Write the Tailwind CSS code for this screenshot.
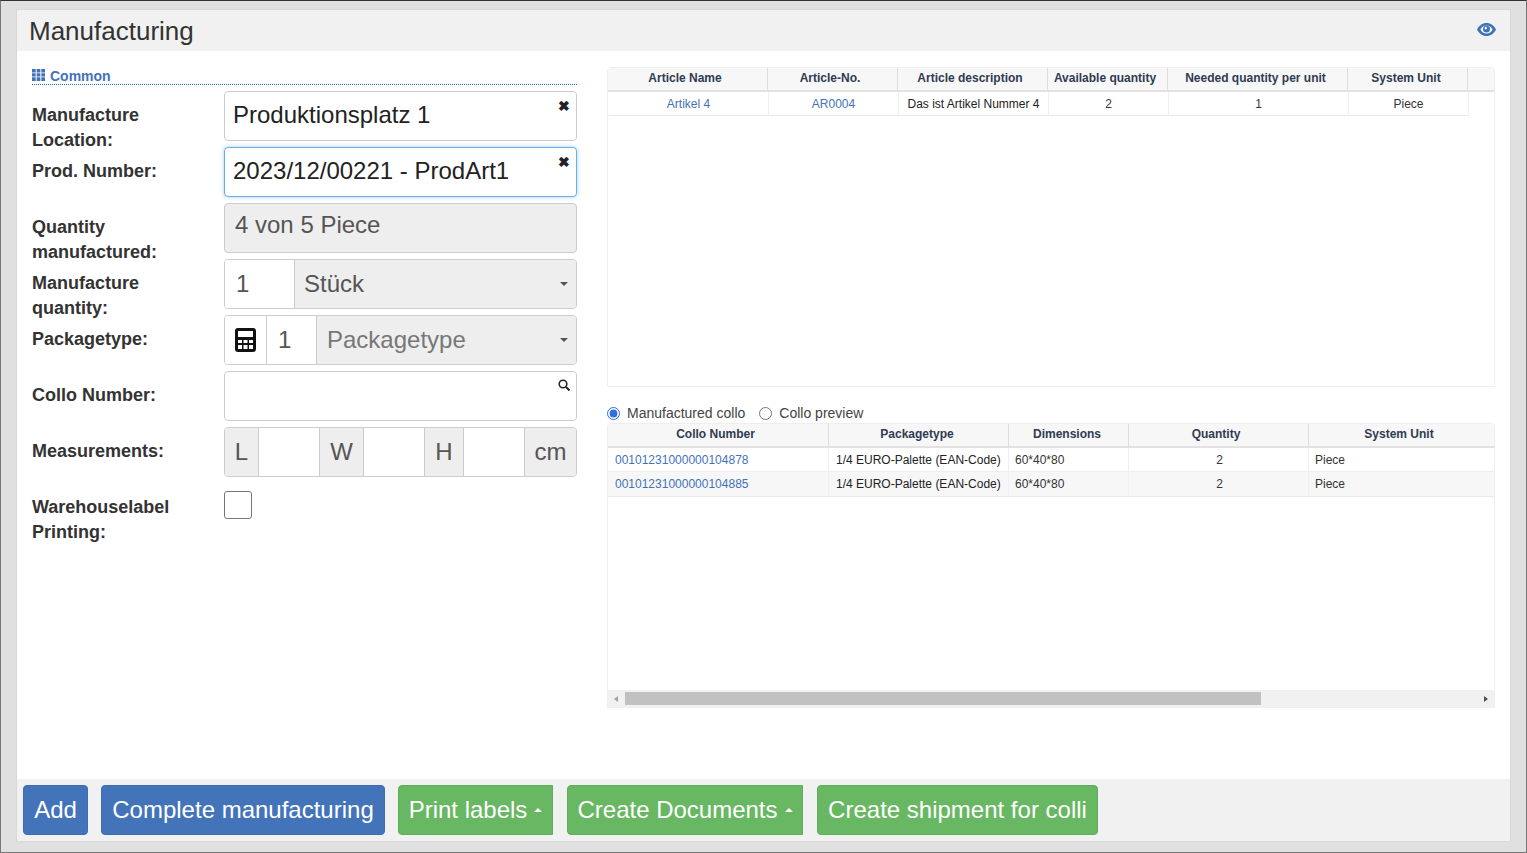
<!DOCTYPE html>
<html lang="en">
<head>
  <meta charset="UTF-8" />
  <title>Manufacturing</title>
  <script src="https://cdn.jsdelivr.net/npm/@tailwindcss/browser@4"></script>
</head>
<body class="bg-[#e0e0e0] font-['Liberation_Sans',Arial,sans-serif] text-[#333] overflow-hidden">
  <div class="h-[853px] w-[1527px] border-t border-l border-r border-b border-t-[#333] border-x-[#777] border-b-[#777] px-[15px] pt-[8px]">
    <div class="flex flex-col h-[833px] bg-white border border-[#d8d8d8]">

      <!-- Header -->
      <header class="flex items-center justify-between h-[41px] shrink-0 bg-[#f1f1f1] pl-[12px] pr-[14px]">
        <h1 class="text-[26px] text-[#333] leading-[42px]">Manufacturing</h1>
        <svg class="w-[19px] h-[13px] mb-[2px] text-[#3f75b8]" viewBox="0 0 19 13">
          <path fill="currentColor" d="M9.500 0C5.300 0 2 2.600 0 6.500 2 10.400 5.300 13 9.500 13s7.500-2.600 9.500-6.500C17 2.600 13.700 0 9.500 0z"/>
          <path fill="#fff" d="M9.500 2.500c-2.600 0-4.800 1.600-6 4 1.200 2.400 3.400 4 6 4s4.800-1.600 6-4c-1.200-2.400-3.400-4-6-4z"/>
          <circle fill="currentColor" cx="9.500" cy="6" r="3.500"/>
          <path fill="#fff" d="M8.500 3.800a1.300 1.300 0 0 1 1.400 1.300 1.300 1.300 0 0 1-2.200 1 2.200 2.200 0 0 1 .8-2.300z"/>
        </svg>
      </header>

      <!-- Main -->
      <main class="flex flex-1 min-h-0 pl-[15px] pr-[15px]">

        <!-- Form -->
        <section class="w-[545px] shrink-0 pt-[16px]">
          <div class="flex items-center gap-[5px] h-[18px] border-b border-dotted border-[#2f6fc0] text-[14px] font-bold text-[#4472b8] leading-[18px]">
            <svg class="w-[13px] h-[12px] mb-[1px]" viewBox="0 0 13 12" fill="currentColor">
              <path d="M0 0h3.700v3.600H0zM4.650 0h3.700v3.600h-3.700zM9.300 0H13v3.600H9.300zM0 4.200h3.700v3.400H0zM4.650 4.200h3.700v3.400h-3.700zM9.300 4.200H13v3.400H9.300zM0 8.200h3.700V12H0zM4.650 8.200h3.700V12h-3.700zM9.300 8.200H13V12H9.300z"/>
            </svg>
            <span>Common</span>
          </div>

          <div class="mt-[6px] flex flex-col gap-[6px] text-[18px] font-bold text-[#333] leading-[25px]">

            <div class="flex h-[50px]">
              <label class="w-[192px] shrink-0 pt-[12px]">Manufacture<br>Location:</label>
              <div class="relative flex-1 bg-white border border-[#ccc] rounded-[4px] pl-[8px] text-[24px] font-normal leading-[46px] text-[#222]">
                Produktionsplatz 1
                <span class="absolute right-[6px] top-[6px] text-[14px] leading-[16px] font-bold text-[#222]">✖</span>
              </div>
            </div>

            <div class="flex h-[50px]">
              <label class="w-[192px] shrink-0 pt-[12px]">Prod. Number:</label>
              <div class="relative flex-1 bg-white border border-[#66afe9] shadow-[0_0_4px_rgba(102,175,233,0.6)] rounded-[4px] pl-[8px] text-[24px] font-normal leading-[46px] text-[#222]">
                2023/12/00221 - ProdArt1
                <span class="absolute right-[6px] top-[6px] text-[14px] leading-[16px] font-bold text-[#222]">✖</span>
              </div>
            </div>

            <div class="flex h-[50px]">
              <label class="w-[192px] shrink-0 pt-[12px]">Quantity<br>manufactured:</label>
              <div class="flex-1 bg-[#eee] border border-[#ccc] rounded-[4px] pl-[10px] text-[24px] font-normal leading-[42px] text-[#555]">4 von 5 Piece</div>
            </div>

            <div class="flex h-[50px]">
              <label class="w-[192px] shrink-0 pt-[12px]">Manufacture<br>quantity:</label>
              <div class="flex flex-1 border border-[#ccc] rounded-[4px] overflow-hidden text-[24px] font-normal leading-[48px] text-[#555]">
                <div class="w-[70px] shrink-0 bg-white pl-[11px] border-r border-[#ccc]">1</div>
                <div class="relative flex-1 bg-[#eee] pl-[9px]">
                  Stück
                  <span class="absolute right-[8px] top-[22px] border-x-[4px] border-t-[4px] border-x-transparent border-t-[#555]"></span>
                </div>
              </div>
            </div>

            <div class="flex h-[50px]">
              <label class="w-[192px] shrink-0 pt-[12px]">Packagetype:</label>
              <div class="flex flex-1 border border-[#ccc] rounded-[4px] overflow-hidden text-[24px] font-normal leading-[48px] text-[#555]">
                <div class="flex items-center justify-center w-[42px] shrink-0 bg-white border-r border-[#ccc] pr-[1px]">
                  <svg class="w-[21px] h-[24px] text-[#111]" viewBox="0 0 21 24" fill="currentColor">
                    <path fill-rule="evenodd" d="M3 0h15a3 3 0 0 1 3 3v18a3 3 0 0 1-3 3H3a3 3 0 0 1-3-3V3a3 3 0 0 1 3-3zm0 3v6h15V3zm0 9v3h4v-3zm5.500 0v3h4v-3zm5.500 0v3h4v-3zM3 17v4h4v-4zm5.500 0v4h4v-4zm5.500 0v4h4v-4z"/>
                  </svg>
                </div>
                <div class="w-[50px] shrink-0 bg-white pl-[11px] border-r border-[#ccc]">1</div>
                <div class="relative flex-1 bg-[#eee] pl-[10px] text-[#777]">
                  Packagetype
                  <span class="absolute right-[8px] top-[22px] border-x-[4px] border-t-[4px] border-x-transparent border-t-[#555]"></span>
                </div>
              </div>
            </div>

            <div class="flex h-[50px]">
              <label class="w-[192px] shrink-0 pt-[12px]">Collo Number:</label>
              <div class="relative flex-1 bg-white border border-[#ccc] rounded-[4px]">
                <svg class="absolute right-[6px] top-[7px] w-[12px] h-[12px] text-[#222]" viewBox="0 0 12 12" fill="none" stroke="currentColor" stroke-width="1.600">
                  <circle cx="5" cy="5" r="3.800"/>
                  <path stroke-width="2" d="M8 8l3.500 3.500"/>
                </svg>
              </div>
            </div>

            <div class="flex h-[50px]">
              <label class="w-[192px] shrink-0 pt-[12px]">Measurements:</label>
              <div class="flex flex-1 border border-[#ccc] rounded-[4px] overflow-hidden text-[24px] font-normal leading-[48px] text-[#555]">
                <div class="w-[34px] shrink-0 bg-[#eee] text-center border-r border-[#ccc]">L</div>
                <div class="w-[61px] shrink-0 bg-white border-r border-[#ccc]"></div>
                <div class="w-[44px] shrink-0 bg-[#eee] text-center border-r border-[#ccc]">W</div>
                <div class="w-[61px] shrink-0 bg-white border-r border-[#ccc]"></div>
                <div class="w-[39px] shrink-0 bg-[#eee] text-center border-r border-[#ccc]">H</div>
                <div class="w-[61px] shrink-0 bg-white border-r border-[#ccc]"></div>
                <div class="flex-1 bg-[#eee] text-center">cm</div>
              </div>
            </div>

            <div class="flex h-[50px]">
              <label class="w-[192px] shrink-0 pt-[12px]">Warehouselabel<br>Printing:</label>
              <div class="w-[28px] h-[28px] mt-[8px] bg-white border border-[#767676] rounded-[3px]"></div>
            </div>
          </div>
        </section>

        <!-- Tables -->
        <section class="w-[888px] ml-[30px] pt-[16px] text-[12px] leading-[24px] text-[#333]">

          <div class="h-[320px] border border-[#eee] rounded-t-[4px]">
            <div class="flex h-[24px] bg-[#f7f7f7] border-b-2 border-[#e2e2e2] font-bold text-[#2f3b52] text-center leading-[20px]">
              <div class="w-[160px] pr-[5px] border-r border-[#ddd]">Article Name</div>
              <div class="w-[130px] pr-[5px] border-r border-[#ddd]">Article-No.</div>
              <div class="w-[150px] pr-[5px] border-r border-[#ddd]">Article description</div>
              <div class="w-[120px] pr-[5px] border-r border-[#ddd]">Available quantity</div>
              <div class="w-[180px] pr-[4px] border-r border-[#ddd]">Needed quantity per unit</div>
              <div class="w-[120px] pr-[3px] border-r border-[#ddd]">System Unit</div>
            </div>
            <div class="flex h-[24px] w-[860px] ml-px border-b border-[#e8e8e8] text-center">
              <div class="w-[160px] border-r border-[#eee] text-[#4472b8]">Artikel 4</div>
              <div class="w-[130px] border-r border-[#eee] text-[#4472b8]">AR0004</div>
              <div class="w-[150px] border-r border-[#eee] text-[#222]">Das ist Artikel Nummer 4</div>
              <div class="w-[120px] border-r border-[#eee]">2</div>
              <div class="w-[180px] border-r border-[#eee]">1</div>
              <div class="w-[120px] border-r border-[#eee]">Piece</div>
            </div>
          </div>

          <div class="flex items-center h-[36px] pt-[16px] text-[14px] text-[#444]">
            <input type="radio" name="collo" checked class="w-[13px] h-[13px] m-0 accent-[#2f6fe0]" />
            <span class="ml-[7px]">Manufactured collo</span>
            <input type="radio" name="collo" class="w-[13px] h-[13px] m-0 ml-[14px]" />
            <span class="ml-[7px]">Collo preview</span>
          </div>

          <div class="flex flex-col h-[285px] border border-[#eee] rounded-t-[4px]">
            <div class="flex h-[24px] shrink-0 bg-[#f7f7f7] border-b-2 border-[#e2e2e2] font-bold text-[#2f3b52] text-center leading-[20px]">
              <div class="w-[221px] pr-[5px] border-r border-[#ddd]">Collo Number</div>
              <div class="w-[180px] pr-[3px] border-r border-[#ddd]">Packagetype</div>
              <div class="w-[120px] pr-[3px] border-r border-[#ddd]">Dimensions</div>
              <div class="w-[180px] pr-[5px] border-r border-[#ddd]">Quantity</div>
              <div class="flex-1 pr-[5px]">System Unit</div>
            </div>
            <div class="flex h-[24px] shrink-0 border-b border-[#eee]">
              <div class="w-[221px] pl-[7px] border-r border-[#f0f0f0] text-[#4472b8]">00101231000000104878</div>
              <div class="w-[180px] pl-[7px] border-r border-[#f0f0f0] text-[#222] whitespace-nowrap">1/4 EURO-Palette (EAN-Code)</div>
              <div class="w-[120px] pl-[6px] border-r border-[#f0f0f0]">60*40*80</div>
              <div class="w-[180px] text-center pl-[2px] border-r border-[#f0f0f0]">2</div>
              <div class="flex-1 pl-[6px]">Piece</div>
            </div>
            <div class="flex h-[25px] shrink-0 bg-[#f7f7f7] border-b border-[#e8e8e8]">
              <div class="w-[221px] pl-[7px] border-r border-[#f0f0f0] text-[#4472b8]">00101231000000104885</div>
              <div class="w-[180px] pl-[7px] border-r border-[#f0f0f0] text-[#222] whitespace-nowrap">1/4 EURO-Palette (EAN-Code)</div>
              <div class="w-[120px] pl-[6px] border-r border-[#f0f0f0]">60*40*80</div>
              <div class="w-[180px] text-center pl-[2px] border-r border-[#f0f0f0]">2</div>
              <div class="flex-1 pl-[6px]">Piece</div>
            </div>
            <div class="flex-1"></div>
            <!-- Scrollbar -->
            <div class="flex items-center h-[17px] shrink-0 bg-[#f1f1f1]">
              <span class="ml-[6px] border-y-[3px] border-r-[4px] border-y-transparent border-r-[#a3a3a3]"></span>
              <div class="w-[636px] h-[13px] ml-[7px] bg-[#c1c1c1]"></div>
              <span class="ml-auto mr-[6px] border-y-[3px] border-l-[4px] border-y-transparent border-l-[#505050]"></span>
            </div>
          </div>
        </section>
      </main>

      <!-- Footer -->
      <footer class="flex items-center h-[62px] shrink-0 bg-[#f1f1f1] pl-[6px] text-[24px] text-white leading-[48px]">
        <button class="h-[50px] w-[65px] bg-[#4374ba] border border-[#3d6cb0] rounded-[4px]">Add</button>
        <button class="h-[50px] w-[284px] ml-[13px] bg-[#4374ba] border border-[#3d6cb0] rounded-[4px]">Complete manufacturing</button>
        <button class="flex items-center justify-center gap-[7px] h-[50px] w-[155px] ml-[13px] bg-[#68b762] border border-[#5fae59] rounded-l-[4px]">
          Print labels
          <span class="border-x-[4px] border-b-[4px] border-x-transparent border-b-white"></span>
        </button>
        <button class="flex items-center justify-center gap-[7px] h-[50px] w-[236px] ml-[14px] bg-[#68b762] border border-[#5fae59] rounded-l-[4px]">
          Create Documents
          <span class="border-x-[4px] border-b-[4px] border-x-transparent border-b-white"></span>
        </button>
        <button class="h-[50px] w-[281px] ml-[14px] bg-[#68b762] border border-[#5fae59] rounded-[4px]">Create shipment for colli</button>
      </footer>
    </div>
  </div>
</body>
</html>
